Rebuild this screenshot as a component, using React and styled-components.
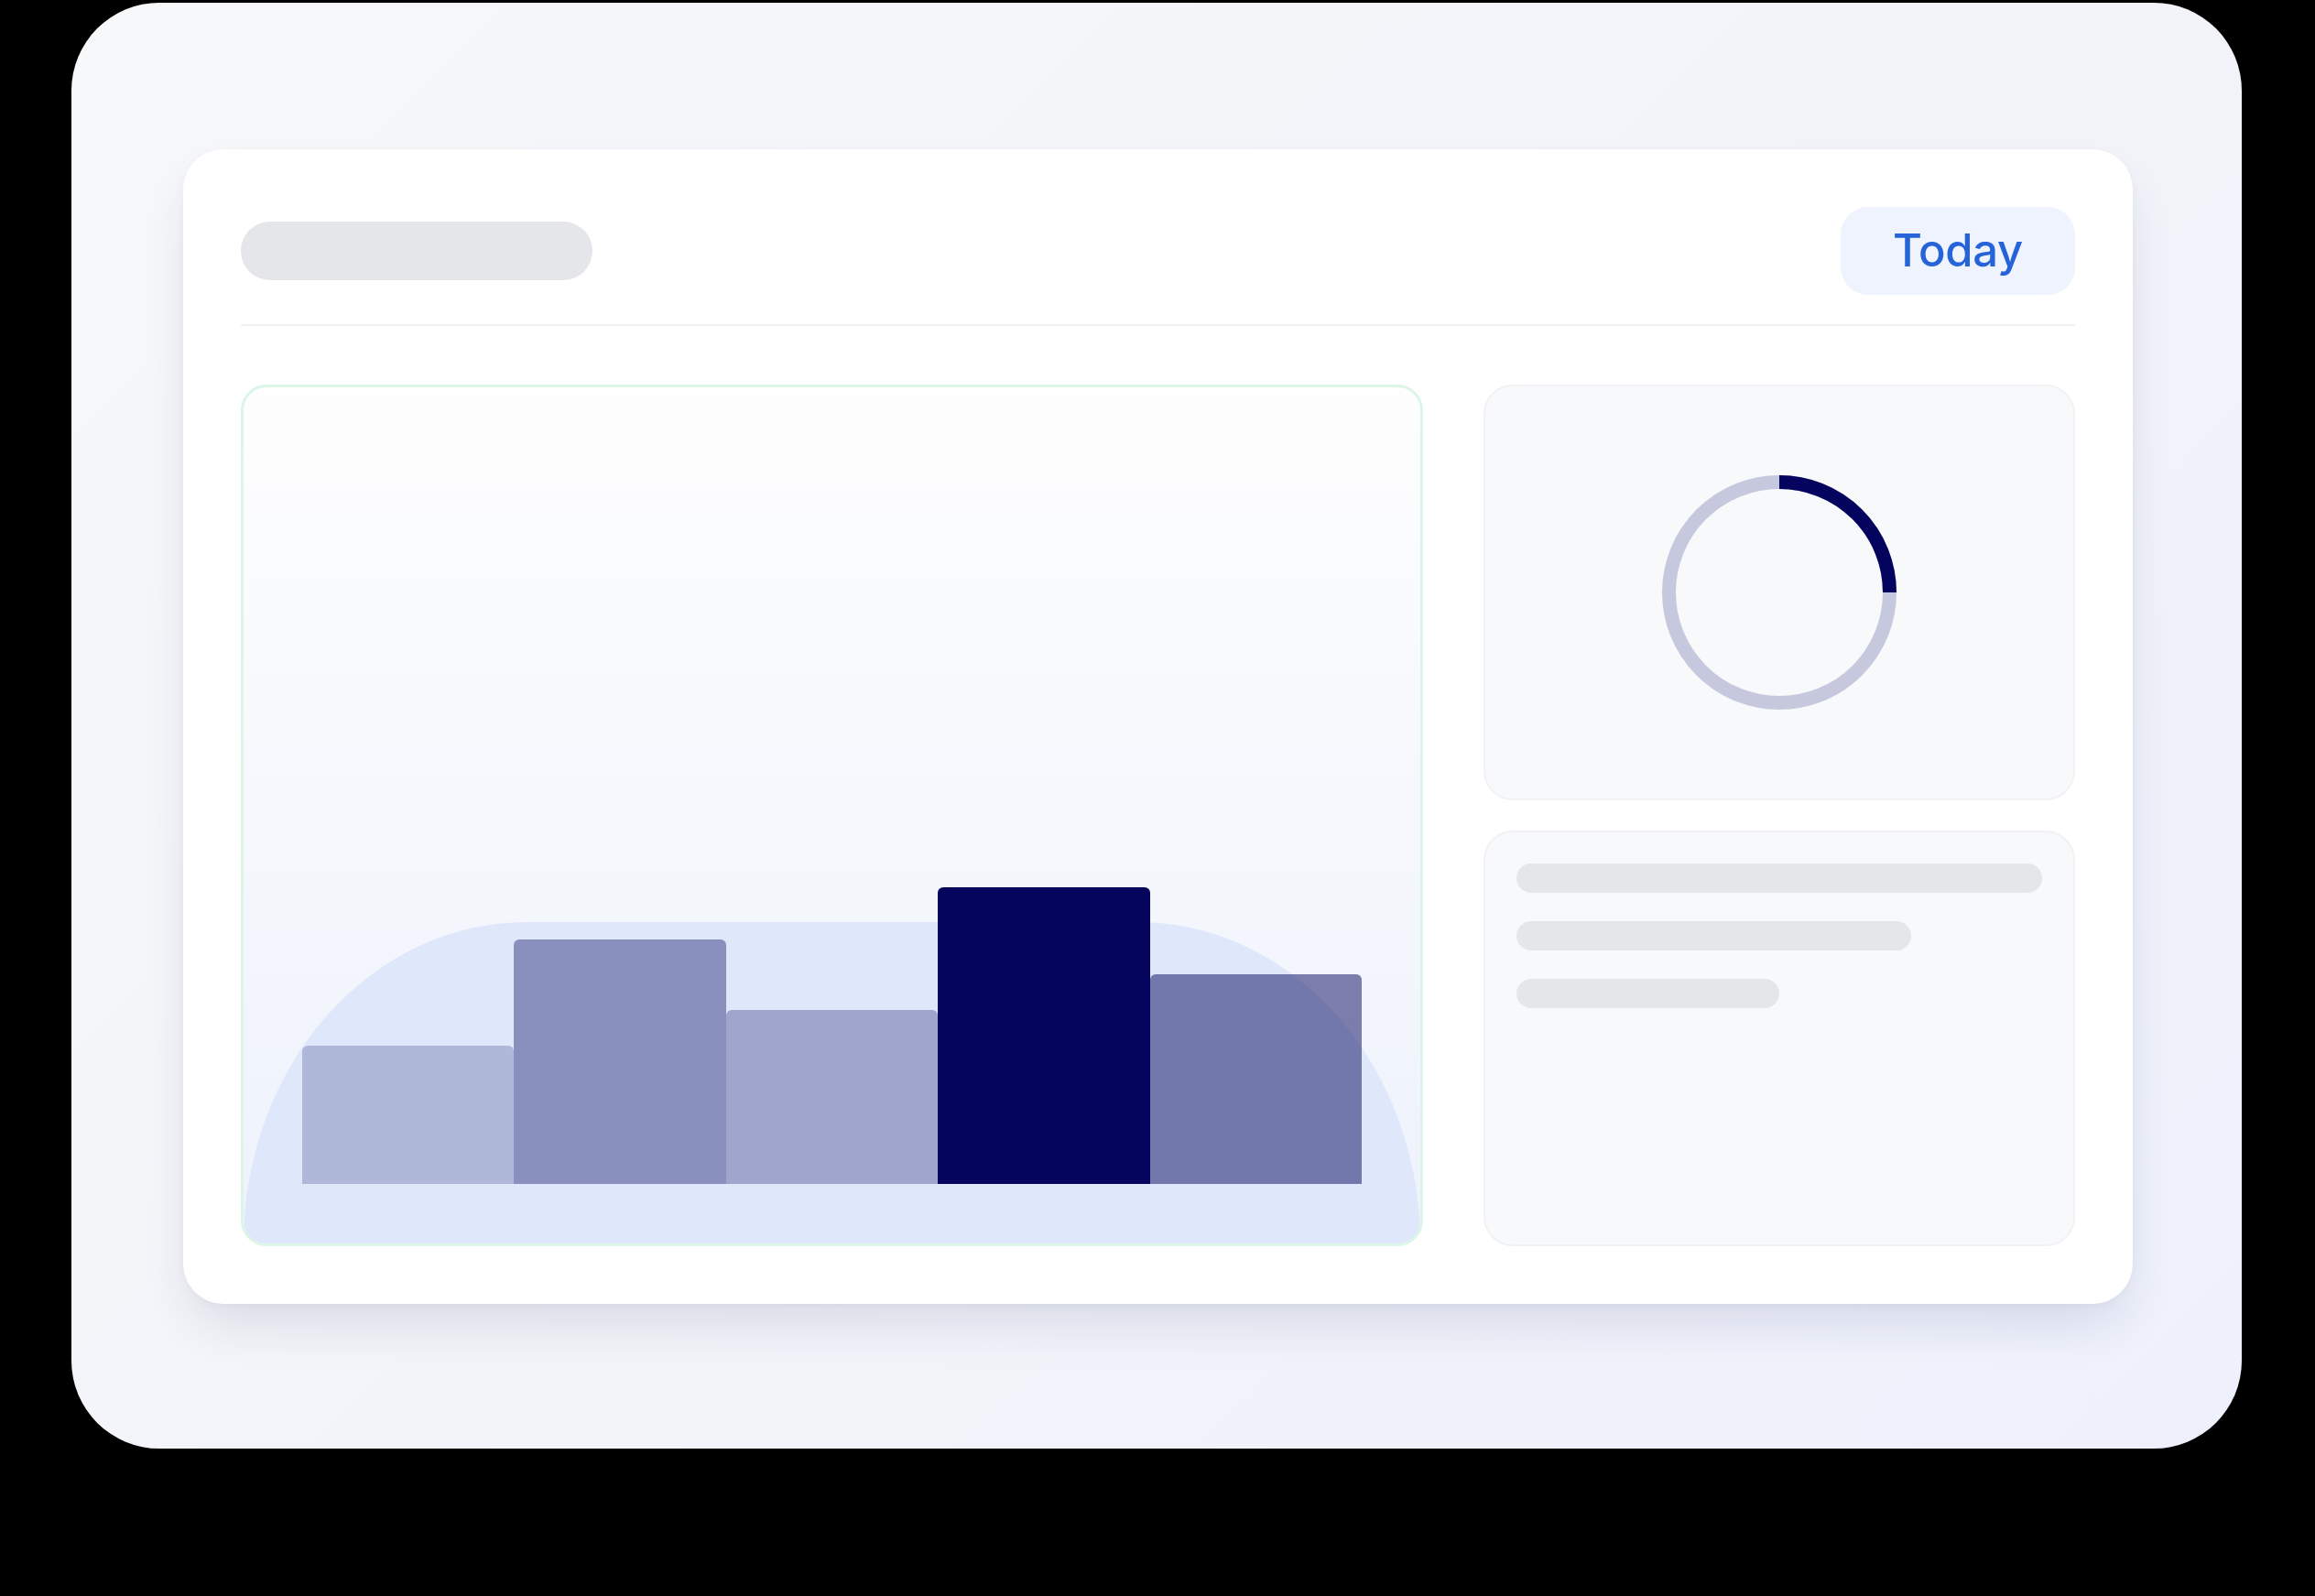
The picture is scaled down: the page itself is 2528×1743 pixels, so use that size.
import React from "react";
import styled, { createGlobalStyle } from "styled-components";

const GlobalStyle = createGlobalStyle`
  html, body {
    margin: 0;
    padding: 0;
    background: #000;
  }
  body {
    font-family: Inter, "Noto Sans", "Liberation Sans", sans-serif;
  }
`;

const Stage = styled.div`
  box-sizing: border-box;
  width: 2528px;
  height: 1743px;
  padding: 3px 0 0 78px;
  background: #000;
`;

const Frame = styled.div`
  box-sizing: border-box;
  width: 2370px;
  height: 1579px;
  border-radius: 96px;
  background: linear-gradient(135deg, #f7f8fa 0%, #f3f4f9 50%, #eef1fc 100%);
  padding: 160px 119px 158px 122px;
`;

const Card = styled.div`
  box-sizing: border-box;
  height: 100%;
  background: #ffffff;
  border-radius: 44px;
  padding: 63px;
  display: flex;
  flex-direction: column;
  box-shadow: 0 28px 56px -12px rgba(30, 40, 90, 0.14), 0 2px 10px rgba(30, 40, 90, 0.03);
`;

const Header = styled.div`
  display: flex;
  align-items: center;
  justify-content: space-between;
  height: 96px;
`;

const TitleSkeleton = styled.div`
  width: 384px;
  height: 64px;
  border-radius: 32px;
  background: #e5e6ea;
`;

const TodayButton = styled.button`
  box-sizing: border-box;
  height: 96px;
  width: 256px;
  border: none;
  border-radius: 30px;
  background: #eef3fd;
  color: #2663d9;
  font-family: Inter, "Noto Sans", "Liberation Sans", sans-serif;
  font-size: 49px;
  font-weight: 500;
  letter-spacing: -0.3px;
  display: flex;
  align-items: center;
  justify-content: center;
  padding: 0 0 2px;
`;

const Divider = styled.div`
  margin-top: 32px;
  height: 2px;
  background: #f0f1f3;
`;

const Main = styled.div`
  flex: 1;
  margin-top: 64px;
  display: grid;
  grid-template-columns: 2fr 1fr;
  gap: 66px;
  min-height: 0;
`;

const ChartPanel = styled.div`
  position: relative;
  box-sizing: border-box;
  overflow: hidden;
  border: 3px solid #dbf6e6;
  border-radius: 28px;
  background: linear-gradient(180deg, #fefefe 0%, #f7f9fd 40%, #eef2fb 100%);
  display: flex;
  flex-direction: column;
  justify-content: flex-end;
  padding: 0 64px 65px;
`;

const Hill = styled.div`
  position: absolute;
  left: 0;
  right: 0;
  bottom: 0;
  height: 351px;
  background: #dfe8fb;
  border-radius: 24% 24% 0 0 / 100% 100% 0 0;
`;

const Bars = styled.div`
  position: relative;
  display: flex;
  align-items: flex-end;
`;

const Bar = styled.div`
  flex: 1;
  height: ${(p) => p.$h}px;
  background: rgba(5, 5, 94, ${(p) => p.$a});
  border-radius: 6px 6px 0 0;
`;

const SideColumn = styled.div`
  display: grid;
  grid-template-rows: 1fr 1fr;
  gap: 33px;
  min-height: 0;
`;

const SidePanel = styled.div`
  box-sizing: border-box;
  min-height: 0;
  background: #f8f9fb;
  border: 2px solid #f1f2f5;
  border-radius: 32px;
`;

const RingPanel = styled(SidePanel)`
  display: flex;
  align-items: center;
  justify-content: center;
`;

const ListPanel = styled(SidePanel)`
  padding: 34px;
  display: flex;
  flex-direction: column;
  gap: 31px;
`;

const LineSkeleton = styled.div`
  height: 32px;
  width: ${(p) => p.$w}%;
  border-radius: 16px;
  background: #e5e6ea;
`;

const bars = [
  { h: 151, a: 0.21 },
  { h: 267, a: 0.39 },
  { h: 190, a: 0.29 },
  { h: 324, a: 1 },
  { h: 229, a: 0.5 },
];

function Ring() {
  const r = 120.5;
  const c = 2 * Math.PI * r;
  return (
    <svg width="258" height="258" viewBox="0 0 258 258">
      <circle cx="129" cy="129" r={r} fill="none" stroke="#c6c9de" strokeWidth="15" />
      <circle
        cx="129"
        cy="129"
        r={r}
        fill="none"
        stroke="#04045e"
        strokeWidth="15"
        strokeLinecap="butt"
        strokeDasharray={`${c * 0.25} ${c}`}
        transform="rotate(-90 129 129)"
      />
    </svg>
  );
}

export default function App() {
  return (
    <>
      <GlobalStyle />
      <Stage>
        <Frame>
          <Card>
            <Header>
              <TitleSkeleton />
              <TodayButton>Today</TodayButton>
            </Header>
            <Divider />
            <Main>
              <ChartPanel>
                <Hill />
                <Bars>
                  {bars.map((b, i) => (
                    <Bar key={i} $h={b.h} $a={b.a} />
                  ))}
                </Bars>
              </ChartPanel>
              <SideColumn>
                <RingPanel>
                  <Ring />
                </RingPanel>
                <ListPanel>
                  <LineSkeleton $w={100} />
                  <LineSkeleton $w={75} />
                  <LineSkeleton $w={50} />
                </ListPanel>
              </SideColumn>
            </Main>
          </Card>
        </Frame>
      </Stage>
    </>
  );
}
